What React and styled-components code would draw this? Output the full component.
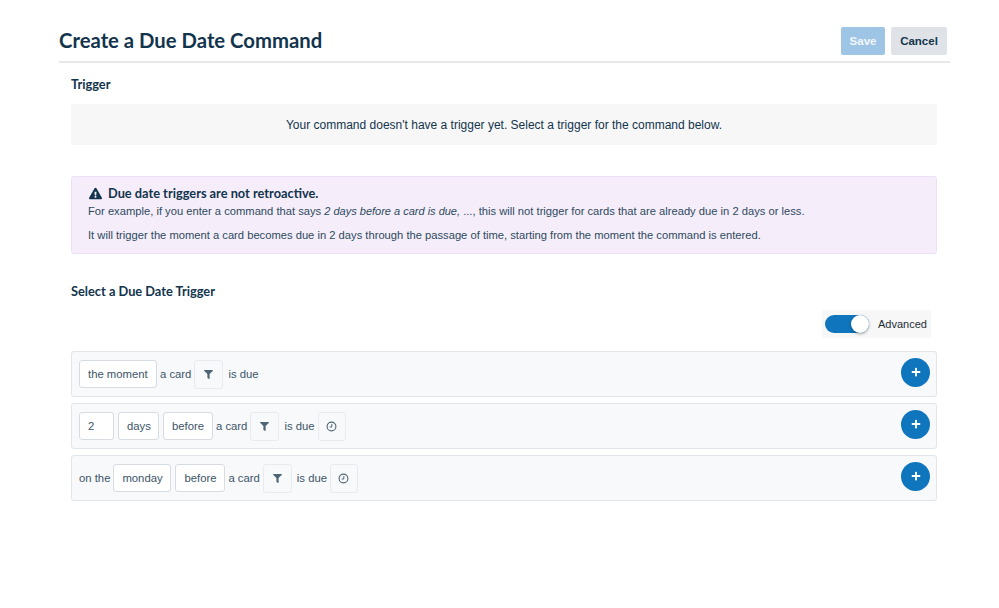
import React from 'react'
import styled, { createGlobalStyle } from 'styled-components'
import { FaFilter, FaExclamationTriangle, FaPlus } from 'react-icons/fa'

const GlobalStyle = createGlobalStyle`
    html, body {
        margin: 0;
        padding: 0;
        background: #fff;
    }
    body {
        font-family: "Liberation Sans", Arial, sans-serif;
        color: #12344d;
    }
`

const Page = styled.div`
    width: 891px;
    height: 608px;
    margin-left: 59px;
`
const Header = styled.div`
    height: 63px;
    box-sizing: border-box;
    padding: 27px 3px 0 0;
    display: flex;
    justify-content: space-between;
    align-items: flex-start;
    border-bottom: 2px solid #e6e8ea;
`
const Title = styled.h1`
    margin: 0;
    font-family: Lato, sans-serif;
    font-weight: 700;
    font-size: 20.3px;
    line-height: 27px;
    color: #12344d;
`
const Actions = styled.div`
    display: flex;
    gap: 6px;
`
const Button = styled.button`
    height: 28px;
    width: ${p => p.$width}px;
    padding: 0;
    border: 0;
    border-radius: 2px;
    font-family: "Liberation Sans", Arial, sans-serif;
    font-size: 11.5px;
    font-weight: 700;
    background: ${p => p.$primary ? '#9fc5e6' : '#dfe3e8'};
    color: ${p => p.$primary ? '#f2f7fc' : '#12344d'};
`
const Content = styled.div`
    padding: 0 13px 0 12px;
`
const Heading = styled.h2`
    margin: 0;
    font-family: Lato, sans-serif;
    font-weight: 700;
    font-size: 12.8px;
    line-height: 16px;
    color: #12344d;
`
const TriggerHeading = styled(Heading)`
    padding-top: 13px;
`
const EmptyBox = styled.div`
    margin-top: 12px;
    height: 41px;
    background: #f7f7f8;
    border-radius: 2px;
    display: flex;
    align-items: center;
    justify-content: center;
    font-size: 12px;
`
const Alert = styled.div`
    margin-top: 31px;
    height: 78px;
    box-sizing: border-box;
    padding: 8px 16px 0;
    background: #f5eefa;
    border: 1px solid #eddff5;
    border-radius: 3px;
`
const AlertTitle = styled.div`
    display: flex;
    align-items: center;
    gap: 6px;
    padding-left: 1px;
    font-family: Lato, sans-serif;
    font-weight: 700;
    font-size: 12.8px;
    line-height: 16px;
`
const AlertText = styled.p`
    margin: ${p => p.$first ? '3px' : '9px'} 0 0;
    font-size: 11.2px;
    line-height: 15px;
    color: #2d4a5e;

    em {
        font-size: 11px;
    }
`
const SelectHeading = styled(Heading)`
    margin-top: 29px;
`
const ToggleRow = styled.div`
    margin-top: 11px;
    display: flex;
    justify-content: flex-end;
    padding-right: 6px;
`
const ToggleBox = styled.div`
    width: 109px;
    height: 28px;
    box-sizing: border-box;
    padding-left: 3px;
    display: flex;
    align-items: center;
    gap: 9px;
    background: #f7f7f8;
    border-radius: 2px;
    font-size: 11px;
    color: #1f2d36;
`
const Track = styled.div`
    width: 44px;
    height: 18px;
    border-radius: 9px;
    background: #0f75bc;
    display: flex;
    justify-content: flex-end;
`
const Knob = styled.div`
    width: 18px;
    height: 18px;
    border-radius: 50%;
    background: #fff;
    box-shadow: 0 1px 3px rgba(0, 0, 0, 0.35);
`
const Rows = styled.div`
    margin-top: 13px;
    display: flex;
    flex-direction: column;
    gap: 6px;
`
const Row = styled.div`
    height: 46px;
    box-sizing: border-box;
    padding: 0 6px 0 7px;
    display: flex;
    align-items: center;
    background: #f8f9fb;
    border: 1px solid #e2e6ea;
    border-radius: 3px;
    font-size: 11.3px;
    color: #3c5568;
`
const Word = styled.span`
    margin: 0 ${p => p.$right ?? 3}px 0 ${p => p.$left ?? 3}px;
`
const Field = styled.div`
    width: ${p => p.$width}px;
    height: 28px;
    box-sizing: border-box;
    padding-left: 8px;
    margin-right: ${p => p.$gap ?? 0}px;
    display: flex;
    align-items: center;
    background: #fff;
    border: 1px solid #d6dce1;
    border-radius: 3px;
`
const IconField = styled.div`
    width: ${p => p.$width ?? 29}px;
    height: 29px;
    box-sizing: border-box;
    display: flex;
    align-items: center;
    justify-content: center;
    background: #f8f9fb;
    border: 1px solid #e8ebef;
    border-radius: 3px;
    color: #4f6677;
`
const AddButton = styled.div`
    margin: 0 0 4px auto;
    width: 29px;
    height: 29px;
    border-radius: 50%;
    background: #0f75bc;
    color: #fff;
    display: flex;
    align-items: center;
    justify-content: center;
`

const ClockIcon = () => (
    <svg width="11" height="11" viewBox="0 0 11 11" fill="none" stroke="#4f6677">
        <circle cx="5.5" cy="5.5" r="4.4" strokeWidth="1.1" />
        <path d="M5.8 3 V6 H3.6" strokeWidth="1" />
    </svg>
)

const Filter = () => <IconField><FaFilter size={9} /></IconField>
const Clock = () => <IconField $width={28}><ClockIcon /></IconField>
const Add = () => <AddButton><FaPlus size={10} /></AddButton>

const App = () => {
    return (
        <Page>
            <GlobalStyle />
            <Header>
                <Title>Create a Due Date Command</Title>
                <Actions>
                    <Button $primary $width={44}>Save</Button>
                    <Button $width={56}>Cancel</Button>
                </Actions>
            </Header>
            <Content>
                <TriggerHeading>Trigger</TriggerHeading>
                <EmptyBox>Your command doesn't have a trigger yet. Select a trigger for the command below.</EmptyBox>
                <Alert>
                    <AlertTitle>
                        <FaExclamationTriangle size={13} />
                        Due date triggers are not retroactive.
                    </AlertTitle>
                    <AlertText $first>For example, if you enter a command that says <em>2 days before a card is due,</em> ..., this will not trigger for cards that are already due in 2 days or less.</AlertText>
                    <AlertText>It will trigger the moment a card becomes due in 2 days through the passage of time, starting from the moment the command is entered.</AlertText>
                </Alert>
                <SelectHeading>Select a Due Date Trigger</SelectHeading>
                <ToggleRow>
                    <ToggleBox>
                        <Track><Knob /></Track>
                        Advanced
                    </ToggleBox>
                </ToggleRow>
                <Rows>
                    <Row>
                        <Field $width={78}>the moment</Field>
                        <Word>a card</Word>
                        <Filter />
                        <Word $left={5}>is due</Word>
                        <Add />
                    </Row>
                    <Row>
                        <Field $width={35} $gap={4}>2</Field>
                        <Field $width={41} $gap={4}>days</Field>
                        <Field $width={50}>before</Field>
                        <Word>a card</Word>
                        <Filter />
                        <Word $left={5}>is due</Word>
                        <Clock />
                        <Add />
                    </Row>
                    <Row>
                        <Word $left={0}>on the</Word>
                        <Field $width={58} $gap={4}>monday</Field>
                        <Field $width={50}>before</Field>
                        <Word>a card</Word>
                        <Filter />
                        <Word $left={5}>is due</Word>
                        <Clock />
                        <Add />
                    </Row>
                </Rows>
            </Content>
        </Page>
    )
}

export default App
